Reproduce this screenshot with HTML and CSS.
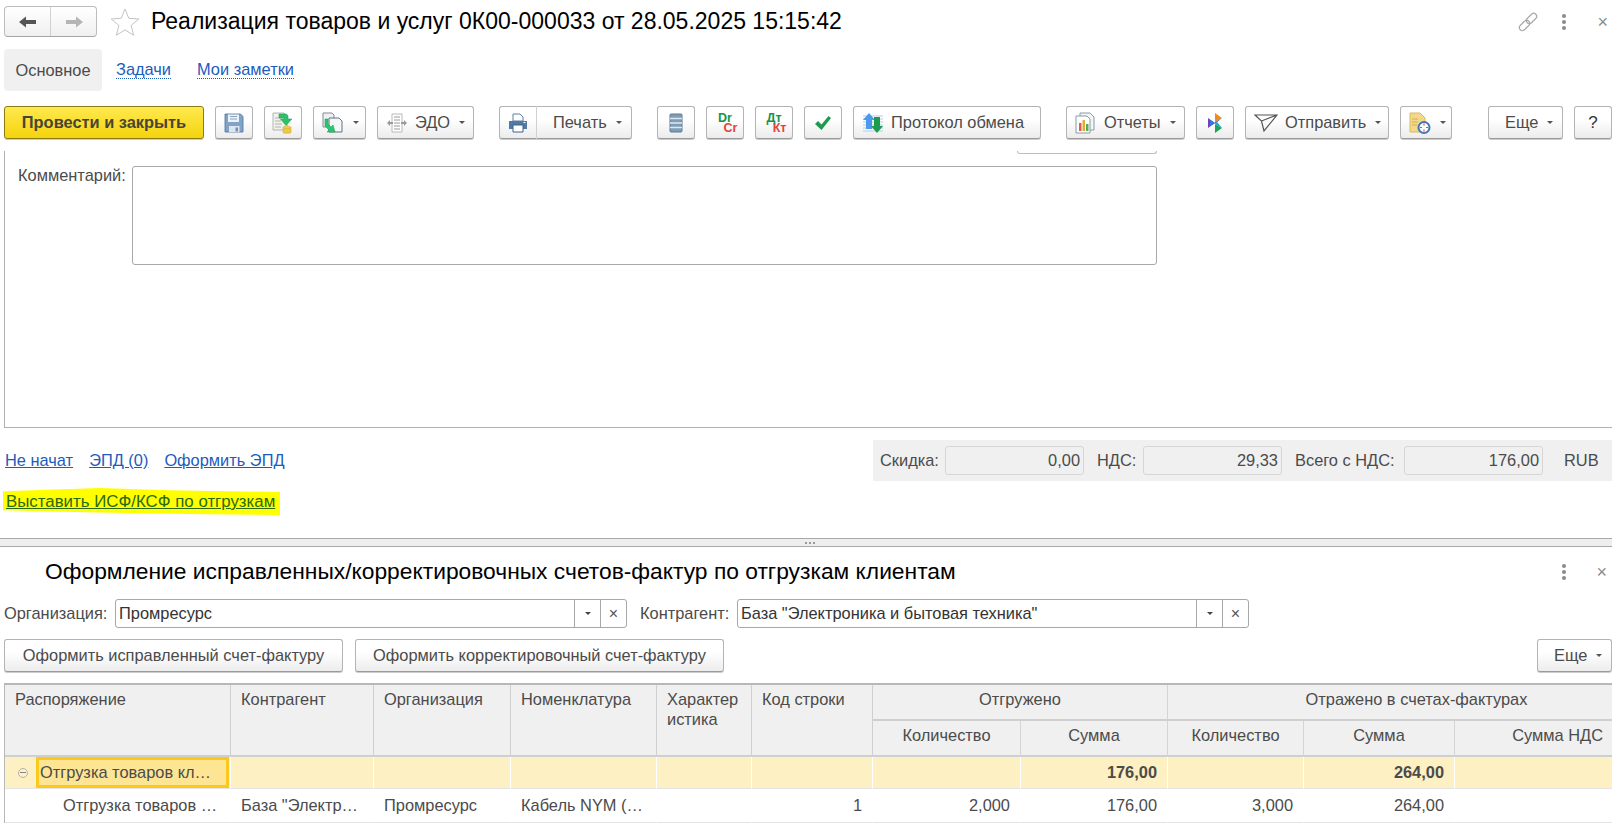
FILE: index.html
```html
<!DOCTYPE html>
<html lang="ru">
<head>
<meta charset="utf-8">
<title>Реализация товаров и услуг</title>
<link rel="stylesheet" href="styles.css">
</head>
<body>
<header class="titlebar">
  <div class="nav">
    <span class="nav-cell"><svg width="20" height="14" viewBox="0 0 20 14"><path d="M1 7 8 1.500V5h10v4H8v3.500z" fill="#555"/></svg></span>
    <span class="nav-cell"><svg width="20" height="14" viewBox="0 0 20 14"><path d="M19 7 12 1.500V5H2v4h10v3.500z" fill="#b5b5b5"/></svg></span>
  </div>
  <svg class="star" width="30" height="30" viewBox="0 0 30 30"><path d="M15 2l3.800 9.300 10 .7-7.700 6.400 2.500 9.800L15 22.900l-8.600 5.300 2.500-9.800L1.200 12l10-.7z" fill="none" stroke="#c4c4c4"/></svg>
  <h1 class="doc-title">Реализация товаров и услуг 0К00-000033 от 28.05.2025 15:15:42</h1>
  <div class="win-icons">
    <svg class="link-icon" width="20" height="20" viewBox="0 0 20 20"><g fill="none" stroke="#a8a8a8" stroke-width="1.200"><rect x="0.500" y="10.500" width="12" height="6" rx="3" transform="rotate(-45 6.500 13.500)"/><rect x="7.500" y="3.500" width="12" height="6" rx="3" transform="rotate(-45 13.500 6.500)"/></g></svg>
    <span class="dots"><i></i><i></i><i></i></span>
    <span class="close">×</span>
  </div>
</header>

<nav class="tabs">
  <span class="tab-active">Основное</span>
  <a class="tab-link">Задачи</a>
  <a class="tab-link tab-link-last">Мои заметки</a>
</nav>

<div class="toolbar">
  <button class="btn btn-primary">Провести и закрыть</button>
  <button class="btn btn-icon gap-11"><svg width="20" height="20" viewBox="0 0 20 20"><path d="M1 1h15.500L19 3.500V19H1z" fill="#7fa3c9" stroke="#4c7196" stroke-width=".8"/><path d="M4 1.500h11v7.500H4z" fill="#eef2f6"/><path d="M6 3.500h7M6 6h7" stroke="#8aa5c0"/><path d="M5 13h10.500v6H5z" fill="#dfe5ea"/><path d="M11.500 14.500h2.500v4h-2.500z" fill="#6e94bd"/></svg></button>
  <button class="btn btn-icon gap-11"><svg width="22" height="22" viewBox="0 0 22 22"><path d="M1 1h11l3 3v14H1z" fill="#f4f2e6" stroke="#9aa6ad" stroke-width=".8"/><path d="M3 6h6M3 9h6M3 12h7M3 15h6" stroke="#aab3bb"/><path d="M7 2h6.500c2 0 2.500 1.500 2.500 3v2h4l-6 6.500L8.500 7H12V6H7z" fill="#2fc06a" stroke="#1b9a4f" stroke-width=".5"/><ellipse cx="15" cy="15.500" rx="4" ry="1.500" fill="#f1d35d" stroke="#c9a431" stroke-width=".5"/><path d="M11 15.500v5c0 1 8 1 8 0v-5c0 1-8 1-8 0z" fill="#efc942" stroke="#c9a431" stroke-width=".5"/></svg></button>
  <button class="btn btn-drop gap-11 w-53"><svg width="22" height="22" viewBox="0 0 22 22"><path d="M1 1h9l2 2v12H1z" fill="#eef0f2" stroke="#7c8c99"/><path d="M7 6h10l3 3v11H7z" fill="#f4f6f7" stroke="#5f7485"/><path d="M3 7h3v5l3 3 2-2 2 7H5l2-2-4-4z" fill="#28c76f" stroke="#159a50" stroke-width=".5"/></svg><span class="caret"></span></button>
  <button class="btn btn-drop gap-11 w-97"><svg width="22" height="20" viewBox="0 0 22 20"><path d="M6 1h10v18H6z" fill="#fff" stroke="#b8b8b8"/><path d="M8 4h6M8 7h6M8 10h6M8 13h6M8 16h6" stroke="#9a9a9a"/><path d="M1 10l3-3v2h3v2H4v2zM21 10l-3-3v2h-3v2h3v2z" fill="#9a9a9a"/></svg><span class="lbl">ЭДО</span><span class="caret"></span></button>
  <div class="split gap-25">
    <button class="btn split-l"><svg width="20" height="20" viewBox="0 0 20 20"><path d="M5 1h7l3 3v4H5z" fill="#fff" stroke="#5e7f9e"/><path d="M1 8h18v8H1z" fill="#4f7aa3"/><path d="M5 12h10v7H5z" fill="#fff" stroke="#3d6488"/><path d="M15.500 9.500h2" stroke="#fff"/></svg></button>
    <button class="btn btn-drop split-r"><span class="lbl">Печать</span><span class="caret"></span></button>
  </div>
  <button class="btn btn-icon gap-25"><svg width="14" height="20" viewBox="0 0 14 20"><rect x="1" y="1" width="12" height="18" rx="1" fill="#7f9db8" stroke="#5b7b98"/><path d="M1 5.500h12M1 10h12M1 14.500h12" stroke="#dfe7ee" stroke-width="1.300"/></svg></button>
  <button class="btn btn-icon gap-11"><span class="dc"><b class="g">Dr</b><b class="r">Cr</b></span></button>
  <button class="btn btn-icon gap-11"><span class="dc"><b class="g">Дт</b><b class="r">Кт</b></span></button>
  <button class="btn btn-icon gap-11"><svg width="18" height="16" viewBox="0 0 18 16"><path d="M1 9l3-3 3.500 3.500L14.500 1 17 3 7.500 15z" fill="#1d9b50"/></svg></button>
  <button class="btn btn-drop gap-11 w-188"><svg width="22" height="22" viewBox="0 0 22 22"><path d="M1 4h20M1 7h20M1 10h20M1 13h20M1 16h20M1 19h20" stroke="#b9cbe0"/><path d="M7 1l6 7H10v9H4V8H1z" fill="#4a9bee"/><path d="M15 21l6-7h-3V5h-6v9H9z" fill="#1d9b50"/></svg><span class="lbl">Протокол обмена</span></button>
  <button class="btn btn-drop gap-25 w-119"><svg width="20" height="22" viewBox="0 0 20 22"><path d="M5 1h10l4 4v13H5z" fill="#f2f4f6" stroke="#8a9aa8"/><path d="M1 4h11l3 3v14H1z" fill="#fff" stroke="#8a9aa8"/><path d="M4 11h2.500v8H4z" fill="#d95f4b"/><path d="M7.500 8h2.500v11H7.500z" fill="#e5a93c"/><path d="M11 12h2.500v7H11z" fill="#58ab5a"/></svg><span class="lbl lbl-wide">Отчеты</span><span class="caret"></span></button>
  <button class="btn btn-icon gap-11"><svg width="16" height="20" viewBox="0 0 16 20"><path d="M1 5l7 5-7 5z" fill="#7a3fb5"/><path d="M8 0l7 5-7 4z" fill="#f08a1d"/><path d="M8 11l7 4-7 5z" fill="#1fa35a"/><path d="M3 7l5 3-5 3zM8 9l7-4-7 6z" fill="#2b7be0"/><path d="M8 11l7 4-5-6z" fill="#17a8c4"/></svg></button>
  <button class="btn btn-drop gap-11 w-144"><svg width="24" height="20" viewBox="0 0 24 20"><path d="M1 2h22L10 18 7.500 8zM7.500 8 23 2" fill="none" stroke="#555" stroke-width="1.200"/></svg><span class="lbl">Отправить</span><span class="caret"></span></button>
  <button class="btn btn-drop gap-11 w-52"><svg width="22" height="22" viewBox="0 0 22 22"><path d="M1 1h10l5 5v14H1z" fill="#f3d88a" stroke="#d9b860"/><path d="M3 7h6M3 10h6M3 13h5" stroke="#d2ae55"/><circle cx="15" cy="15.500" r="5.500" fill="#fff" stroke="#3f78b7" stroke-width="2"/><path d="M15 11.500v2M15 17.500v2M11 15.500h2M17 15.500h2" stroke="#d9534b" stroke-width="1.200"/></svg><span class="caret"></span></button>
  <button class="btn btn-drop gap-36 w-75"><span class="lbl lbl-first">Еще</span><span class="caret"></span></button>
  <button class="btn btn-help">?</button>
</div>

<section class="doc-panel">
  <div class="stub"></div>
  <div class="comment-row">
    <label class="comment-label">Комментарий:</label>
    <div class="comment-box"></div>
  </div>
</section>

<div class="status-row">
  <div class="status-links">
    <a class="ul-link">Не начат</a><a class="ul-link">ЭПД (0)</a><a class="ul-link">Оформить ЭПД</a>
  </div>
  <div class="totals">
    <span class="t-label t-l1">Скидка:</span><span class="t-field">0,00</span>
    <span class="t-label t-l2">НДС:</span><span class="t-field">29,33</span>
    <span class="t-label t-l3">Всего с НДС:</span><span class="t-field">176,00</span>
    <span class="t-cur">RUB</span>
  </div>
</div>

<div class="hl-row"><a class="hl-link">Выставить ИСФ/КСФ по отгрузкам</a></div>

<div class="splitter"><span></span><span></span><span></span></div>

<div class="sub-title">
  <h2>Оформление исправленных/корректировочных счетов-фактур по отгрузкам клиентам</h2>
  <span class="dots"><i></i><i></i><i></i></span>
  <span class="close">×</span>
</div>

<div class="filters">
  <span class="f-label f-label-org">Организация:</span>
  <div class="f-field f-org"><span class="f-val">Промресурс</span><span class="f-btn"><span class="caret caret-dark"></span></span><span class="f-btn f-x">×</span></div>
  <span class="f-label f-label-ctr">Контрагент:</span>
  <div class="f-field f-ctr"><span class="f-val">База "Электроника и бытовая техника"</span><span class="f-btn"><span class="caret caret-dark"></span></span><span class="f-btn f-x">×</span></div>
</div>

<div class="actions">
  <button class="btn w-339">Оформить исправленный счет-фактуру</button>
  <button class="btn w-369">Оформить корректировочный счет-фактуру</button>
  <button class="btn btn-drop w-75 push"><span class="lbl lbl-first">Еще</span><span class="caret"></span></button>
</div>

<table class="grid">
  <colgroup>
    <col class="c1"><col class="c2"><col class="c3"><col class="c4"><col class="c5"><col class="c6"><col class="c7"><col class="c8"><col class="c9"><col class="c10"><col class="c11">
  </colgroup>
  <thead>
    <tr class="h1">
      <th rowspan="2">Распоряжение</th><th rowspan="2">Контрагент</th><th rowspan="2">Организация</th><th rowspan="2">Номенклатура</th><th rowspan="2">Характер<br>истика</th><th rowspan="2">Код строки</th>
      <th colspan="2" class="ctr">Отгружено</th><th colspan="3" class="ctr ctr-wide">Отражено в счетах-фактурах</th>
    </tr>
    <tr class="h2">
      <th class="ctr">Количество</th><th class="ctr">Сумма</th><th class="ctr">Количество</th><th class="ctr">Сумма</th><th class="rt">Сумма НДС</th>
    </tr>
  </thead>
  <tbody>
    <tr class="group">
      <td class="focus-cell"><span class="minus"></span><span class="focus">Отгрузка товаров кл…</span></td><td></td><td></td><td></td><td></td><td></td><td></td><td class="rt b">176,00</td><td></td><td class="rt b">264,00</td><td></td>
    </tr>
    <tr class="item">
      <td class="ind">Отгрузка товаров …</td><td>База "Электр…</td><td>Промресурс</td><td>Кабель NYM (…</td><td></td><td class="rt">1</td><td class="rt">2,000</td><td class="rt">176,00</td><td class="rt">3,000</td><td class="rt">264,00</td><td></td>
    </tr>
  </tbody>
</table>
</body>
</html>
```
FILE: styles.css
```css
* { box-sizing: border-box; }
html, body { margin: 0; padding: 0; height: 826px; overflow: hidden; background: #fff; }
body { font-family: "Liberation Sans", Arial, sans-serif; font-size: 16.4px; color: #4b4b4b; width: 1612px; }
.titlebar { height: 49px; display: flex; align-items: center; padding: 0 0 6px 4px; }
.nav { width: 93px; height: 31px; display: flex; border: 1px solid #bdbdbd; border-bottom-color: #a5a5a5; border-radius: 4px; background: linear-gradient(#fff, #f0f0f0); }
.nav-cell { flex: 1; display: flex; align-items: center; justify-content: center; }
.nav-cell + .nav-cell { border-left: 1px solid #d2d2d2; }
.star { margin-left: 13px; flex: none; }
.doc-title { margin: 0 0 0 11px; font-size: 23px; font-weight: 400; color: #000; white-space: nowrap; flex: 1; }
.win-icons { display: flex; align-items: center; padding-right: 4px; }
.win-icons .dots { margin-left: 24px; }
.win-icons .close { margin-left: 31px; }
.dots { display: inline-flex; flex-direction: column; gap: 2px; width: 4px; }
.dots i { width: 4px; height: 4px; border-radius: 50%; background: #8a8a8a; display: block; }
.close { font-size: 18px; color: #8a8a8a; line-height: 1; }
.tabs { height: 42px; display: flex; align-items: center; padding-left: 4px; }
.tab-active { width: 98px; height: 42px; background: #f0f0f0; border-radius: 4px; display: flex; align-items: center; justify-content: center; }
.tab-link { color: #1c5cbd; border-bottom: 1px dotted #1c5cbd; margin-left: 14px; line-height: 17px; }
.tab-link-last { margin-left: 26px; }
.toolbar { height: 33px; margin-top: 15px; display: flex; padding-left: 4px; }
.btn { font: inherit; color: #4b4b4b; height: 33px; border: 1px solid #b4b4b4; border-bottom-color: #9a9a9a; border-radius: 3px; background: linear-gradient(#fff 40%, #ececec); display: inline-flex; align-items: center; justify-content: center; padding: 0; flex: none; box-shadow: 0 1px 0 #ccc; }
.btn-primary { width: 200px; font-weight: 700; color: #4a4434; background: linear-gradient(#ffe94f, #f4d40c); border-color: #8d7a12; }
.btn-icon { width: 38px; }
.btn-drop { justify-content: flex-start; padding-left: 8px; }
.btn-help { width: 38px; margin-left: 11px; font-size: 17px; color: #333; }
.gap-11 { margin-left: 11px; }
.gap-25 { margin-left: 25px; }
.gap-36 { margin-left: 36px; }
.w-53 { width: 53px; }
.w-97 { width: 97px; }
.w-188 { width: 188px; }
.w-119 { width: 119px; }
.w-144 { width: 144px; }
.w-52 { width: 52px; }
.w-75 { width: 75px; }
.w-339 { width: 339px; }
.w-369 { width: 369px; }
.lbl { margin-left: 7px; white-space: nowrap; }
.lbl-first { margin-left: 8px; }
.lbl-wide { margin-left: 9px; }
.caret { width: 0; height: 0; border-left: 3px solid transparent; border-right: 3px solid transparent; border-top: 3px solid #555; margin-left: 9px; }
.caret-dark { margin: 0; border-top-color: #444; }
.split { display: flex; }
.split-l { width: 38px; border-radius: 3px 0 0 3px; border-right-color: #d0d0d0; }
.split-r { width: 95px; border-left: 0; border-radius: 0 3px 3px 0; padding-left: 9px; }
.dc { display: flex; flex-direction: column; font-size: 12.5px; line-height: 10px; width: 25px; }
.dc .g { color: #13954a; }
.dc .r { color: #e2433f; align-self: flex-end; }
.doc-panel { margin: 12px 0 0 4px; height: 277px; border-left: 1px solid #b0b0b0; border-bottom: 1px solid #b0b0b0; position: relative; }
.stub { position: absolute; left: 1012px; top: 0; width: 140px; height: 3px; border: 1px solid #bdbdbd; border-top: 0; border-radius: 0 0 3px 3px; }
.comment-row { display: flex; padding: 15px 0 0 13px; }
.comment-label { width: 114px; padding-top: 1px; line-height: 17px; }
.comment-box { width: 1025px; height: 99px; border: 1px solid #a8a8a8; border-radius: 3px; }
.status-row { display: flex; justify-content: space-between; height: 41px; margin-top: 12px; }
.status-links { display: flex; align-items: center; padding-left: 5px; gap: 16px; }
.ul-link { color: #1c5cbd; text-decoration: underline; }
.totals { width: 739px; height: 41px; background: #f0f0f0; display: flex; align-items: center; padding-left: 7px; }
.t-l1 { width: 65px; }
.t-l2 { width: 46px; }
.t-l3 { width: 109px; }
.t-label { white-space: nowrap; }
.t-field { width: 139px; height: 29px; border: 1px solid #d6d6d6; border-radius: 3px; text-align: right; line-height: 27px; padding-right: 3px; margin-right: 13px; }
.t-cur { margin-left: 8px; }
.hl-row { height: 57px; padding-top: 7px; }
.hl-link { display: inline-block; width: 277px; height: 27px; margin-left: 3px; padding-left: 3px; font-size: 16.85px; line-height: 27px; background: #ffff00; color: #2a6a10; text-decoration: underline; white-space: nowrap; clip-path: polygon(0 12%, 35% 0, 60% 8%, 100% 15%, 100% 100%, 60% 95%, 30% 90%, 0 82%); }
.splitter { height: 9px; background: #eee; border-top: 1px solid #a8a8a8; border-bottom: 1px solid #a8a8a8; display: flex; justify-content: center; align-items: center; gap: 2px; padding-left: 8px; }
.splitter span { width: 2px; height: 2px; background: #999; }
.sub-title { height: 51px; display: flex; align-items: center; padding: 0 5px 2px 45px; }
.sub-title h2 { margin: 0; font-size: 22.8px; font-weight: 400; color: #000; flex: 1; white-space: nowrap; }
.sub-title .close { margin-left: 30px; }
.filters { height: 31px; display: flex; align-items: center; }
.f-label-org { margin-left: 4px; width: 111px; white-space: nowrap; }
.f-label-ctr { margin-left: 13px; width: 97px; white-space: nowrap; }
.f-field { height: 29px; display: flex; border: 1px solid #a8a8a8; border-radius: 3px; }
.f-org { width: 512px; }
.f-ctr { width: 512px; }
.f-val { flex: 1; padding-left: 3px; line-height: 26px; color: #333; }
.f-btn { width: 26px; border-left: 1px solid #a8a8a8; display: flex; align-items: center; justify-content: center; color: #555; }
.f-x { font-size: 16px; }
.actions { display: flex; gap: 12px; margin-top: 10px; padding-left: 4px; }
.push { margin-left: auto; }
.grid { margin: 11px 0 0 4px; width: 1608px; border-collapse: separate; border-spacing: 0; table-layout: fixed; border-top: 2px solid #b8b8b8; border-left: 1px solid #b8b8b8; }
.c1 { width: 226px; } .c2 { width: 143px; } .c3 { width: 137px; } .c4 { width: 146px; } .c5 { width: 95px; } .c6 { width: 121px; } .c7 { width: 148px; } .c8 { width: 147px; } .c9 { width: 136px; } .c10 { width: 151px; } .c11 { width: 158px; }
.grid th { background: #f0f0f0; font-weight: 400; text-align: left; vertical-align: top; padding: 4px 10px 0; line-height: 20px; border-right: 2px solid #fff; border-bottom: 2px solid #cfcfcf; white-space: nowrap; }
.grid th[rowspan] { border-right: 1px solid #cfcfcf; }
.h1 { height: 36px; }
.h2 { height: 36px; }
.grid th.ctr { text-align: center; border-right: 1px solid #d4d4d4; }
.grid th.ctr-wide { padding-left: 62px; border-right: 0; }
.grid th.rt { text-align: right; border-right: 0; }
.grid td { height: 33px; padding: 0 10px; white-space: nowrap; border-right: 1px solid #fff; border-bottom: 1px solid #e4e4e4; overflow: hidden; }
.group td { background: #fdf0c3; height: 32px; }
.item td { height: 34px; }
.rt { text-align: right; }
.b { font-weight: 700; }
.ind { padding-left: 58px !important; }
.grid td.focus-cell { padding: 0 0 0 13px; background: #fdf0c3; }
.minus { display: inline-block; width: 10px; height: 10px; border: 1px solid #b4b4b4; border-radius: 50%; vertical-align: middle; margin-right: 8px; position: relative; }
.minus::after { content: ""; position: absolute; left: 1px; right: 1px; top: 3px; height: 1px; background: #888; }
.focus { display: inline-block; width: 193px; height: 31px; line-height: 25px; padding-left: 1px; border: 3px solid #fbc81e; background: #fde593; vertical-align: middle; overflow: hidden; white-space: nowrap; }
```
